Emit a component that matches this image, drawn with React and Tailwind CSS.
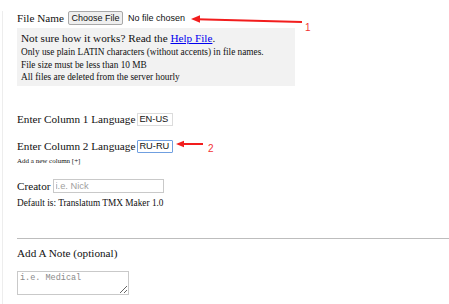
export default function App() {
  return (
    <div className="relative h-[304px] w-[449px] overflow-hidden bg-white font-['Liberation_Serif',serif] text-[11.2px] text-[#111]">
      <div className="ml-[2px] h-full border-l border-[#ededed] pl-[14px]">
        {/* File picker row */}
        <div className="mt-[11px] flex h-[14px] items-center">
          <span className="leading-[14px]">File Name</span>
          <span className="ml-[4px] flex h-[14px] items-center rounded-[2px] border border-[#a8a8a8] bg-[#efefef] px-[2.5px] font-['Liberation_Sans',sans-serif] text-[9px] leading-none">
            Choose File
          </span>
          <span className="ml-[5px] font-['Liberation_Sans',sans-serif] text-[9px] leading-none">No file chosen</span>
        </div>

        {/* Help box */}
        <div className="mt-[3px] h-[58px] w-[278px] bg-[#f2f2f2] px-[4px] pt-[3px]">
          <p className="leading-[15px]">
            Not sure how it works? Read the{" "}
            <a href="#" className="text-[#0000ee] underline">
              Help File
            </a>
            .
          </p>
          <p className="text-[9.3px] leading-[12.5px]">Only use plain LATIN characters (without accents) in file names.</p>
          <p className="text-[9.3px] leading-[12.5px]">File size must be less than 10 MB</p>
          <p className="text-[9.3px] leading-[12.5px]">All files are deleted from the server hourly</p>
        </div>

        {/* Languages */}
        <div className="mt-[27px] flex h-[13px] items-center">
          <span>Enter Column 1 Language</span>
          <input
            defaultValue="EN-US"
            className="ml-[2px] h-[13px] w-[36px] border border-[#dcdcdc] px-[1px] font-['Liberation_Sans',sans-serif] text-[9.3px] text-[#111] outline-none"
          />
        </div>
        <div className="mt-[14px] flex h-[13px] items-center">
          <span>Enter Column 2 Language</span>
          <input
            defaultValue="RU-RU"
            className="ml-[2px] h-[13px] w-[36px] rounded-[1px] border border-[#6f9fe0] px-[1px] font-['Liberation_Sans',sans-serif] text-[9.3px] text-[#111] outline-none"
          />
        </div>
        <div className="mt-[4px] text-[7px] leading-[9px]">Add a new column [+]</div>

        {/* Creator */}
        <div className="mt-[13px] flex h-[14px] items-center">
          <span>Creator</span>
          <input
            placeholder="i.e. Nick"
            className="ml-[2px] h-[14px] w-[111px] border border-[#c9c9c9] px-[2px] font-['Liberation_Sans',sans-serif] text-[9.3px] outline-none placeholder:text-[#a0a0a0]"
          />
        </div>
        <div className="mt-[4px] text-[9.3px] leading-[12px]">Default is: Translatum TMX Maker 1.0</div>

        <div className="mt-[29px] border-t border-[#bdbdbd]" />

        <div className="mt-[7px] leading-[14px]">Add A Note (optional)</div>
        <textarea
          placeholder="i.e. Medical"
          className="mt-[11px] block h-[24px] w-[112px] border border-[#c9c9c9] px-[2px] py-[1px] font-['Liberation_Mono',monospace] text-[8.5px] leading-[11px] outline-none placeholder:text-[#8a8a8a]"
        />
      </div>

      {/* Annotation arrows */}
      <svg className="pointer-events-none absolute left-0 top-0" width="449" height="304" viewBox="0 0 449 304">
        <line x1="302" y1="22" x2="197" y2="19.2" stroke="#f21d1d" strokeWidth="2" />
        <polygon points="191,19 200,15.2 200,22.8" fill="#f21d1d" />
        <line x1="203" y1="144" x2="182" y2="144" stroke="#f21d1d" strokeWidth="2" />
        <polygon points="176,144 184,140.8 184,147.2" fill="#f21d1d" />
      </svg>
      <span className="absolute left-[305px] top-[23px] font-['Liberation_Sans',sans-serif] text-[10px] leading-none text-[#f23333]">1</span>
      <span className="absolute left-[208px] top-[144px] font-['Liberation_Sans',sans-serif] text-[10px] leading-none text-[#f23333]">2</span>
    </div>
  );
}
